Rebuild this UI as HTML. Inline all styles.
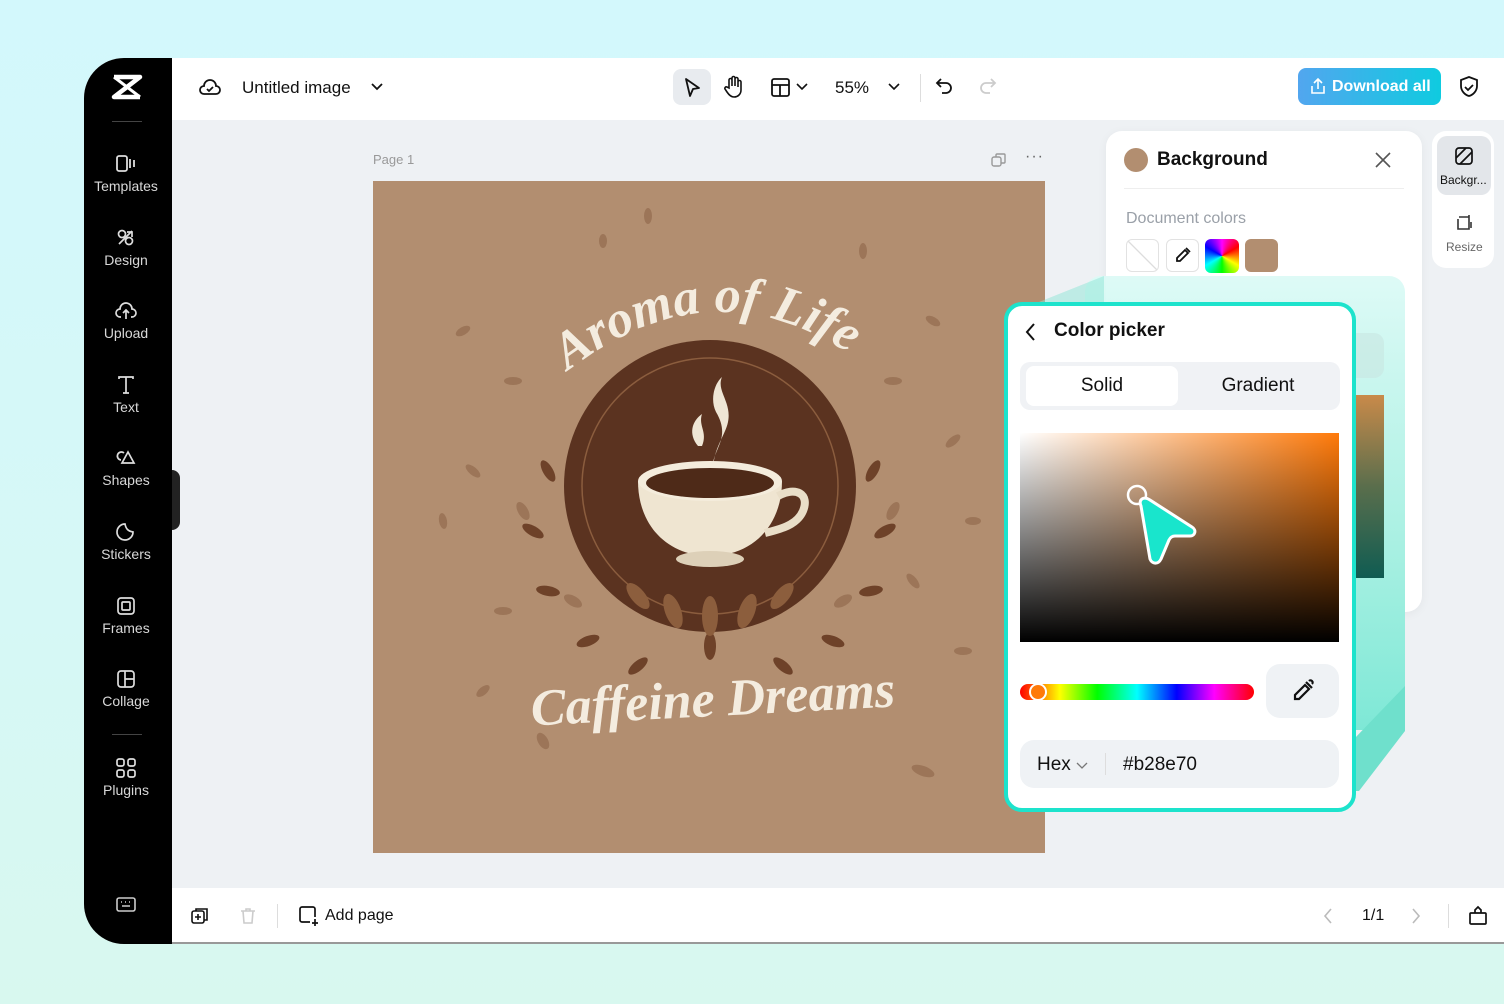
<!DOCTYPE html>
<html><head><meta charset="utf-8"><style>
*{margin:0;padding:0;box-sizing:border-box}
body{width:1504px;height:1004px;overflow:hidden;background:linear-gradient(180deg,#d3f8fc 0%,#d6f8f6 60%,#d8f8ef 100%);font-family:"Liberation Sans",sans-serif;position:relative;color:#111}
.app{position:absolute;left:84px;top:58px;width:1440px;height:886px;background:#eef1f4;border-radius:40px 0 0 40px;overflow:hidden}
.side{position:absolute;left:0;top:0;width:88px;height:886px;background:#000;color:#ddd}
.nav{position:absolute;left:0;width:84px;text-align:center;font-size:14px;color:#d8d8d8}
.nav svg{display:block;margin:0 auto 4px}
.top{position:absolute;left:88px;top:0;right:0;height:62px;background:#fff}
.bot{position:absolute;left:88px;top:830px;right:0;height:56px;background:#fff;border-bottom:2px solid #999}
.abs{position:absolute}
</style></head><body>
<div class="app">
 <div class="side">
  <svg class="abs" style="left:27px;top:16px" width="32" height="26" viewBox="0 0 32 26"><path d="M3 3h26L3 23h26" fill="none" stroke="#fff" stroke-width="4.5" stroke-linejoin="round"/><path d="M3 3l26 20M29 3L3 23" stroke="#fff" stroke-width="3"/></svg>
  <div class="abs" style="left:28px;top:63px;width:30px;height:1px;background:#444"></div>
  <div class="nav" style="top:96px"><svg width="22" height="20" viewBox="0 0 22 20" fill="none" stroke="#ddd" stroke-width="1.8"><rect x="2" y="2" width="10" height="15" rx="2"/><path d="M15 5v9M19 6v7"/></svg>Templates</div>
  <div class="nav" style="top:170px"><svg width="22" height="20" viewBox="0 0 22 20" fill="none" stroke="#ddd" stroke-width="1.7"><circle cx="7" cy="6" r="3.5"/><circle cx="14" cy="13" r="3.5"/><path d="M4 16L17 3M12 4h5v5"/></svg>Design</div>
  <div class="nav" style="top:243px"><svg width="24" height="20" viewBox="0 0 24 20" fill="none" stroke="#ddd" stroke-width="1.7"><path d="M7 16H6a4 4 0 010-8 6 6 0 0112 0 4 4 0 010 8h-1"/><path d="M12 18v-8M9 12l3-3 3 3"/></svg>Upload</div>
  <div class="nav" style="top:317px"><svg width="22" height="20" viewBox="0 0 22 20" fill="none" stroke="#ddd" stroke-width="1.7"><path d="M4 4V2h14v2M11 2v16M8 18h6"/></svg>Text</div>
  <div class="nav" style="top:390px"><svg width="22" height="20" viewBox="0 0 22 20" fill="none" stroke="#ddd" stroke-width="1.7"><path d="M9 5a4 4 0 10-3 7"/><path d="M13 4l6 11H7z"/></svg>Shapes</div>
  <div class="nav" style="top:464px"><svg width="22" height="20" viewBox="0 0 22 20" fill="none" stroke="#ddd" stroke-width="1.7"><path d="M18 10a8 8 0 11-8-8c1 5 3 7 8 8z"/></svg>Stickers</div>
  <div class="nav" style="top:538px"><svg width="22" height="20" viewBox="0 0 22 20" fill="none" stroke="#ddd" stroke-width="1.7"><rect x="3" y="2" width="16" height="16" rx="3"/><rect x="7" y="6" width="8" height="8" rx="1"/></svg>Frames</div>
  <div class="nav" style="top:611px"><svg width="22" height="20" viewBox="0 0 22 20" fill="none" stroke="#ddd" stroke-width="1.7"><rect x="3" y="2" width="16" height="16" rx="3"/><path d="M10 2v16M10 10h9"/></svg>Collage</div>
  <div class="abs" style="left:28px;top:676px;width:30px;height:1px;background:#444"></div>
  <div class="nav" style="top:700px"><svg width="22" height="20" viewBox="0 0 22 20" fill="none" stroke="#ddd" stroke-width="1.7"><rect x="2" y="1" width="7" height="7" rx="2"/><rect x="13" y="1" width="7" height="7" rx="2"/><rect x="2" y="12" width="7" height="7" rx="2"/><rect x="13" y="12" width="7" height="7" rx="2"/></svg>Plugins</div>
  <svg class="abs" style="left:31px;top:838px" width="22" height="18" viewBox="0 0 22 18" fill="none" stroke="#ccc" stroke-width="1.6"><rect x="2" y="2" width="18" height="13" rx="2"/><path d="M6 6h1M10 6h1M14 6h1M7 10h8"/></svg>
 </div>
 <div class="abs" style="left:88px;top:412px;width:8px;height:60px;background:#222;border-radius:0 8px 8px 0"></div>
 <div class="top">
  <svg class="abs" style="left:26px;top:18px" width="24" height="22" viewBox="0 0 24 22" fill="none" stroke="#111" stroke-width="1.8"><path d="M7 18H6a4 4 0 010-8 6 6 0 0112 0 4 4 0 010 8z"/><path d="M9 13l2 2 4-4"/></svg>
  <div class="abs" style="left:70px;top:20px;font-size:17px">Untitled image</div>
  <svg class="abs" style="left:198px;top:24px" width="14" height="10"><path d="M2 2l5 5 5-5" fill="none" stroke="#111" stroke-width="1.8"/></svg>
  <div class="abs" style="left:501px;top:11px;width:38px;height:36px;background:#e8ebef;border-radius:8px"></div>
  <svg class="abs" style="left:510px;top:19px" width="20" height="22" viewBox="0 0 20 22" fill="none" stroke="#111" stroke-width="1.8" stroke-linejoin="round"><path d="M4 2l13 9-6 1-3 7z"/></svg>
  <svg class="abs" style="left:551px;top:17px" width="22" height="24" viewBox="0 0 22 24" fill="none" stroke="#111" stroke-width="1.6"><path d="M6 13V5a1.5 1.5 0 013 0v6V3a1.5 1.5 0 013 0v8V4a1.5 1.5 0 013 0v8V7a1.5 1.5 0 013 0v8c0 4-3 7-7 7-3 0-5-2-7-5l-2-3a1.5 1.5 0 012-2z"/></svg>
  <svg class="abs" style="left:598px;top:19px" width="22" height="22" viewBox="0 0 22 22" fill="none" stroke="#111" stroke-width="1.8"><rect x="2" y="2" width="17" height="17" rx="2"/><path d="M2 8h17M10 8v11"/></svg>
  <svg class="abs" style="left:624px;top:25px" width="12" height="9"><path d="M1 1l5 5 5-5" fill="none" stroke="#111" stroke-width="1.6"/></svg>
  <div class="abs" style="left:663px;top:20px;font-size:17px">55%</div>
  <svg class="abs" style="left:716px;top:25px" width="12" height="9"><path d="M1 1l5 5 5-5" fill="none" stroke="#111" stroke-width="1.6"/></svg>
  <div class="abs" style="left:748px;top:16px;width:1px;height:28px;background:#ddd"></div>
  <svg class="abs" style="left:762px;top:18px" width="22" height="22" viewBox="0 0 22 22" fill="none" stroke="#111" stroke-width="1.8"><path d="M7 3L3 7l4 4"/><path d="M3 7h9a5 5 0 010 10H8"/></svg>
  <svg class="abs" style="left:804px;top:18px" width="22" height="22" viewBox="0 0 22 22" fill="none" stroke="#ccc" stroke-width="1.8"><path d="M15 3l4 4-4 4"/><path d="M19 7h-9a5 5 0 000 10h4"/></svg>
  <div class="abs" style="left:1126px;top:10px;width:143px;height:37px;border-radius:8px;background:linear-gradient(90deg,#52a6ef,#0fcbe0);color:#fff;font-size:16px;line-height:38px;padding-left:34px;font-weight:bold">Download all</div>
  <svg class="abs" style="left:1138px;top:19px" width="16" height="18" viewBox="0 0 16 18" fill="none" stroke="#fff" stroke-width="1.6"><path d="M8 12V2M4 6l4-4 4 4M2 9v7h12V9"/></svg>
  <svg class="abs" style="left:1286px;top:17px" width="22" height="24" viewBox="0 0 22 24" fill="none" stroke="#111" stroke-width="1.8"><path d="M11 2l8 3v6c0 5-4 9-8 10-4-1-8-5-8-10V5z"/><path d="M7 12l3 3 5-5"/></svg>
 </div>
 <div class="abs" style="left:289px;top:94px;font-size:13px;color:#999">Page 1</div>
 <svg class="abs" style="left:906px;top:94px" width="18" height="16" viewBox="0 0 18 16" fill="none" stroke="#999" stroke-width="1.4"><rect x="2" y="5" width="9" height="9" rx="2"/><path d="M6 5V3a1 1 0 011-1h7a1 1 0 011 1v7a1 1 0 01-1 1h-3"/></svg>
 <div class="abs" style="left:941px;top:90px;font-size:16px;color:#666;letter-spacing:1px">···</div>

 <svg class="abs" style="left:289px;top:123px" width="672" height="672" viewBox="0 0 672 672">
  <rect width="672" height="672" fill="#b28e70"/>
  <g fill="#8a6245" opacity=".55">
   <ellipse cx="90" cy="150" rx="8" ry="4" transform="rotate(-30 90 150)"/><ellipse cx="140" cy="200" rx="9" ry="4"/><ellipse cx="100" cy="290" rx="9" ry="4" transform="rotate(40 100 290)"/><ellipse cx="70" cy="340" rx="8" ry="4" transform="rotate(80 70 340)"/><ellipse cx="130" cy="430" rx="9" ry="4"/><ellipse cx="110" cy="510" rx="8" ry="4" transform="rotate(-40 110 510)"/><ellipse cx="170" cy="560" rx="9" ry="5" transform="rotate(60 170 560)"/><ellipse cx="560" cy="140" rx="8" ry="4" transform="rotate(30 560 140)"/><ellipse cx="520" cy="200" rx="9" ry="4"/><ellipse cx="580" cy="260" rx="9" ry="4" transform="rotate(-40 580 260)"/><ellipse cx="600" cy="340" rx="8" ry="4"/><ellipse cx="540" cy="400" rx="9" ry="4" transform="rotate(50 540 400)"/><ellipse cx="590" cy="470" rx="9" ry="4"/><ellipse cx="550" cy="590" rx="12" ry="5" transform="rotate(20 550 590)"/><ellipse cx="275" cy="35" rx="4" ry="8"/><ellipse cx="230" cy="60" rx="4" ry="7"/><ellipse cx="490" cy="70" rx="4" ry="8"/><ellipse cx="200" cy="420" rx="10" ry="5" transform="rotate(30 200 420)"/><ellipse cx="470" cy="420" rx="10" ry="5" transform="rotate(-30 470 420)"/><ellipse cx="150" cy="330" rx="10" ry="5" transform="rotate(60 150 330)"/><ellipse cx="520" cy="330" rx="10" ry="5" transform="rotate(-60 520 330)"/>
  </g>
  <g fill="#6e4229">
   <ellipse cx="175" cy="290" rx="12" ry="5" transform="rotate(60 175 290)"/><ellipse cx="160" cy="350" rx="12" ry="5" transform="rotate(30 160 350)"/><ellipse cx="175" cy="410" rx="12" ry="5" transform="rotate(10 175 410)"/><ellipse cx="215" cy="460" rx="12" ry="5" transform="rotate(-20 215 460)"/><ellipse cx="265" cy="485" rx="12" ry="5" transform="rotate(-40 265 485)"/><ellipse cx="500" cy="290" rx="12" ry="5" transform="rotate(-60 500 290)"/><ellipse cx="512" cy="350" rx="12" ry="5" transform="rotate(-30 512 350)"/><ellipse cx="498" cy="410" rx="12" ry="5" transform="rotate(-10 498 410)"/><ellipse cx="460" cy="460" rx="12" ry="5" transform="rotate(20 460 460)"/><ellipse cx="410" cy="485" rx="12" ry="5" transform="rotate(40 410 485)"/><ellipse cx="337" cy="465" rx="6" ry="14"/>
  </g>
  <circle cx="337" cy="305" r="146" fill="#5b3320"/>
  <circle cx="337" cy="305" r="128" fill="none" stroke="#8b5d3e" stroke-width="1.5"/>
  <g fill="#8c5e3d"><ellipse cx="300" cy="430" rx="8" ry="18" transform="rotate(-20 300 430)"/><ellipse cx="337" cy="435" rx="8" ry="20"/><ellipse cx="374" cy="430" rx="8" ry="18" transform="rotate(20 374 430)"/><ellipse cx="265" cy="415" rx="7" ry="16" transform="rotate(-40 265 415)"/><ellipse cx="409" cy="415" rx="7" ry="16" transform="rotate(40 409 415)"/></g>
  <path d="M341 296c-8-25 20-35 2-65 -6-12-2-28 6-35-6 14 10 25 6 45-3 15-18 30-14 55z" fill="#efe6d5"/>
  <path d="M325 265c-10-12-6-25 4-32-4 12 6 18 0 32z" fill="#efe6d5"/>
  <path d="M265 300c0 45 30 75 72 75s72-30 72-75z" fill="#efe5d1"/>
  <ellipse cx="337" cy="300" rx="72" ry="20" fill="#f4ecdc"/>
  <ellipse cx="337" cy="302" rx="64" ry="15" fill="#4e2a18"/>
  <path d="M405 315c18-10 32-2 25 15-6 14-22 18-38 22" fill="none" stroke="#e9dec8" stroke-width="8"/>
  <ellipse cx="337" cy="378" rx="34" ry="8" fill="#ddd0b8"/>
  <defs><path id="arc" d="M195 190 Q337 80 480 175"/></defs>
  <text font-family="Liberation Serif,serif" font-style="italic" font-weight="bold" font-size="52" fill="#f4ecdf"><textPath href="#arc">Aroma of Life</textPath></text>
  <text x="340" y="535" text-anchor="middle" font-family="Liberation Serif,serif" font-style="italic" font-weight="bold" font-size="52" fill="#f4ecdf" transform="rotate(-3 340 520)">Caffeine Dreams</text>
 </svg>

 <div class="bot">
  <svg class="abs" style="left:18px;top:18px" width="20" height="20" viewBox="0 0 20 20" fill="none" stroke="#111" stroke-width="1.6"><rect x="2" y="5" width="12" height="12" rx="2"/><path d="M6 5V3h11v11h-3M8 8v6M5 11h6"/></svg>
  <svg class="abs" style="left:66px;top:18px" width="20" height="20" viewBox="0 0 20 20" fill="none" stroke="#ccc" stroke-width="1.6"><path d="M3 5h14M8 5V3h4v2M5 5l1 12h8l1-12"/></svg>
  <div class="abs" style="left:105px;top:16px;width:1px;height:24px;background:#ddd"></div>
  <svg class="abs" style="left:126px;top:17px" width="22" height="22" viewBox="0 0 22 22" fill="none" stroke="#111" stroke-width="1.7"><path d="M12 17H4a2 2 0 01-2-2V4a2 2 0 012-2h11a2 2 0 012 2v8M17 14v7M14 18h6"/></svg>
  <div class="abs" style="left:153px;top:19px;font-size:16px">Add page</div>
  <svg class="abs" style="left:1150px;top:19px" width="12" height="18"><path d="M9 2L3 9l6 7" fill="none" stroke="#bbb" stroke-width="1.6"/></svg>
  <div class="abs" style="left:1190px;top:19px;font-size:16px">1/1</div>
  <svg class="abs" style="left:1238px;top:19px" width="12" height="18"><path d="M3 2l6 7-6 7" fill="none" stroke="#bbb" stroke-width="1.6"/></svg>
  <div class="abs" style="left:1276px;top:16px;width:1px;height:24px;background:#ddd"></div>
  <svg class="abs" style="left:1296px;top:17px" width="20" height="22" viewBox="0 0 20 22" fill="none" stroke="#111" stroke-width="1.7"><rect x="2" y="8" width="16" height="11" rx="1"/><path d="M7 8V5l3-3 3 3v3"/></svg>
 </div>

 <div class="abs" style="left:1022px;top:73px;width:316px;height:481px;background:#fff;border-radius:16px;box-shadow:0 2px 10px rgba(0,0,0,.05)"></div>
 <div class="abs" style="left:1040px;top:90px;width:24px;height:24px;border-radius:50%;background:#b28e70"></div>
 <div class="abs" style="left:1073px;top:91px;font-size:19px;font-weight:bold">Background</div>
 <svg class="abs" style="left:1290px;top:93px" width="18" height="18"><path d="M2 2l14 14M16 2L2 16" stroke="#555" stroke-width="1.6"/></svg>
 <div class="abs" style="left:1040px;top:130px;width:280px;height:1px;background:#eee"></div>
 <div class="abs" style="left:1042px;top:152px;font-size:16px;color:#9aa0a8">Document colors</div>
 <div class="abs" style="left:1042px;top:181px;width:33px;height:33px;border:1px solid #e2e2e2;border-radius:6px;background:linear-gradient(45deg,transparent 48%,#ddd 49%,#ddd 51%,transparent 52%)"></div>
 <div class="abs" style="left:1082px;top:181px;width:33px;height:33px;border:1px solid #e2e2e2;border-radius:6px"></div>
 <svg class="abs" style="left:1089px;top:187px" width="20" height="20" viewBox="0 0 20 20" fill="none" stroke="#111" stroke-width="1.8"><path d="M12 5l3 3-8 8H4v-3z"/><path d="M13 3l4 4"/></svg>
 <div class="abs" style="left:1121px;top:181px;width:34px;height:34px;border-radius:6px;background:conic-gradient(#f0f,#f00,#ff0,#0f0,#0ff,#00f,#f0f)"></div>
 <div class="abs" style="left:1161px;top:181px;width:33px;height:33px;border-radius:6px;background:#b28e70"></div>

 <div class="abs" style="left:1348px;top:73px;width:62px;height:137px;background:#fff;border-radius:14px"></div>
 <div class="abs" style="left:1353px;top:78px;width:54px;height:59px;background:#e3e6ea;border-radius:10px"></div>
 <svg class="abs" style="left:1370px;top:88px" width="20" height="20" viewBox="0 0 20 20" fill="none" stroke="#111" stroke-width="1.7"><rect x="2" y="2" width="16" height="16" rx="3"/><path d="M2 12L12 2M6 18L18 6"/></svg>
 <div class="abs" style="left:1356px;top:115px;font-size:12px">Backgr...</div>
 <svg class="abs" style="left:1370px;top:155px" width="20" height="20" viewBox="0 0 20 20" fill="none" stroke="#333" stroke-width="1.6"><path d="M5 4h10v12H4V6M15 2v4M17 9v6"/></svg>
 <div class="abs" style="left:1362px;top:182px;font-size:12px;color:#666">Resize</div>

 <div class="abs" style="left:1001px;top:218px;width:320px;height:454px;border-radius:16px;background:linear-gradient(180deg,rgba(220,250,246,.95),#a8f0e2 60%,#7ee8d6);"></div>
 <div class="abs" style="left:1220px;top:275px;width:80px;height:45px;background:rgba(200,230,225,.6);border-radius:10px"></div>
 <div class="abs" style="left:1272px;top:337px;width:28px;height:183px;background:linear-gradient(180deg,#c98a4a,#5a6e4c 50%,#0f5c52)"></div>
 <svg class="abs" style="left:940px;top:218px" width="390" height="520" viewBox="0 0 390 520"><path d="M5 30L80 0V300H5z" fill="#8ee6d6" opacity=".5"/><path d="M381 410V455L335 515H280z" fill="#6fe0cc"/></svg>

 <div class="abs" style="left:920px;top:244px;width:352px;height:510px;background:#fff;border:4px solid #1de3cc;border-radius:18px">
  <svg class="abs" style="left:16px;top:16px" width="14" height="20"><path d="M10 2L3 10l7 8" fill="none" stroke="#111" stroke-width="2"/></svg>
  <div class="abs" style="left:46px;top:14px;font-size:19px;font-weight:bold">Color picker</div>
  <div class="abs" style="left:12px;top:56px;width:320px;height:48px;background:#f0f2f5;border-radius:10px"></div>
  <div class="abs" style="left:18px;top:60px;width:152px;height:40px;background:#fff;border-radius:8px;text-align:center;line-height:40px;font-size:19px">Solid</div>
  <div class="abs" style="left:174px;top:60px;width:152px;height:40px;text-align:center;line-height:40px;font-size:19px">Gradient</div>
  <div class="abs" style="left:12px;top:127px;width:319px;height:209px;background:linear-gradient(180deg,transparent,#000),linear-gradient(90deg,#fff,#ff7a0a)"></div>
  <svg class="abs" style="left:115px;top:175px" width="80" height="90" viewBox="0 0 80 90"><circle cx="14" cy="14" r="9" fill="none" stroke="#fff" stroke-width="2.5"/><path d="M18 25c-3-7 3-10 9-6l42 27c5 3 3 9-2 9H52c-3 0-5 2-6 4l-8 19c-3 6-9 5-11 0z" fill="#19e5cc" stroke="#fff" stroke-width="3" stroke-linejoin="round"/></svg>
  <div class="abs" style="left:12px;top:378px;width:234px;height:16px;border-radius:8px;background:linear-gradient(90deg,#f00,#ff0 17%,#0f0 33%,#0ff 50%,#00f 67%,#f0f 83%,#f00)"></div>
  <div class="abs" style="left:21px;top:377px;width:18px;height:18px;border-radius:50%;background:#ff7a0a;border:2.5px solid #fff"></div>
  <div class="abs" style="left:258px;top:358px;width:73px;height:54px;background:#eff2f5;border-radius:14px"></div>
  <svg class="abs" style="left:282px;top:372px" width="26" height="26" viewBox="0 0 26 26" fill="none" stroke="#111" stroke-width="2.2"><path d="M15 7l4 4-10 10H5v-4z"/><path d="M16 4l6 6M19 3a2 2 0 013 3"/></svg>
  <div class="abs" style="left:12px;top:434px;width:319px;height:48px;background:#eff2f5;border-radius:14px"></div>
  <div class="abs" style="left:29px;top:448px;font-size:19px">Hex</div>
  <svg class="abs" style="left:68px;top:456px" width="12" height="8"><path d="M1 1l5 5 5-5" fill="none" stroke="#777" stroke-width="1.3"/></svg>
  <div class="abs" style="left:97px;top:447px;width:1px;height:22px;background:#ddd"></div>
  <div class="abs" style="left:115px;top:448px;font-size:19px">#b28e70</div>
 </div>
</div>
</body></html>
